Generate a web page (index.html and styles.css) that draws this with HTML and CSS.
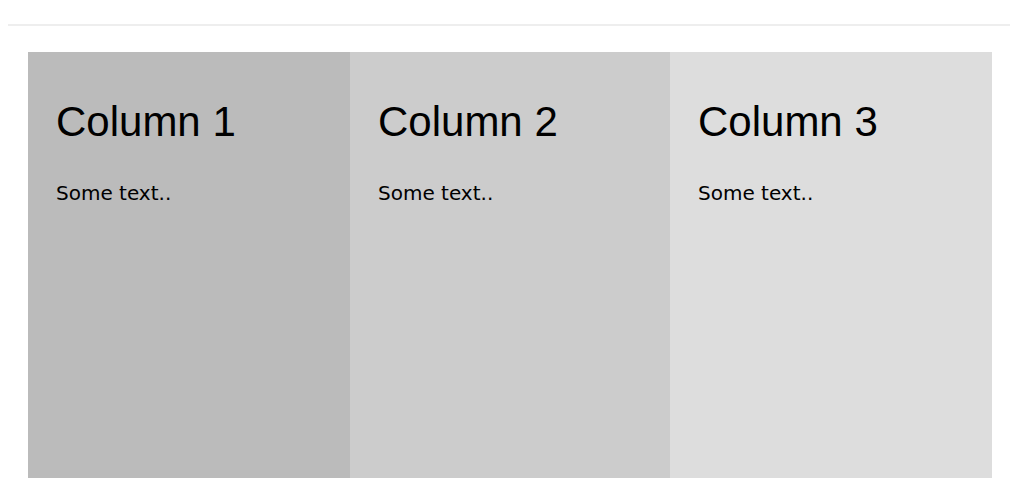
FILE: index.html
```html
<!DOCTYPE html>
<html lang="en">
<head>
    <meta charset="UTF-8">
    <meta name="viewport" content="width=device-width, initial-scale=1.0">
    <title>Three Columns</title>
    <link rel="stylesheet" href="styles.css">
</head>
<body>
<hr class="divider">

<div class="row">
    <div class="column col-1">
        <h2>Column 1</h2>
        <p>Some text..</p>
    </div>
    <div class="column col-2">
        <h2>Column 2</h2>
        <p>Some text..</p>
    </div>
    <div class="column col-3">
        <h2>Column 3</h2>
        <p>Some text..</p>
    </div>
</div>

</body>
</html>
```

FILE: styles.css
```css
*, *::before, *::after {
    box-sizing: border-box;
}

body {
    margin: 8px;
    font-family: "DejaVu Sans", Verdana, sans-serif;
    color: #000000;
    background-color: #ffffff;
}

.divider {
    margin: 16px 0 26px;
    height: 0;
    border: none;
    border-top: 2px solid #eeeeee;
}

.row {
    display: grid;
    grid-template-columns: 322px 320px 322px;
    width: 964px;
    margin: 0 20px;
    height: 426px;
}

.column {
    padding: 28px;
}

.column h2 {
    font-family: "Liberation Sans", Arial, sans-serif;
    font-weight: normal;
    font-size: 42px;
    line-height: 50px;
    margin: 17px 0 0;
}

.column p {
    font-size: 20px;
    line-height: 24px;
    margin: 34px 0 0;
}

.col-1 {
    background-color: #bbbbbb;
}

.col-2 {
    background-color: #cccccc;
}

.col-3 {
    background-color: #dddddd;
}
```
